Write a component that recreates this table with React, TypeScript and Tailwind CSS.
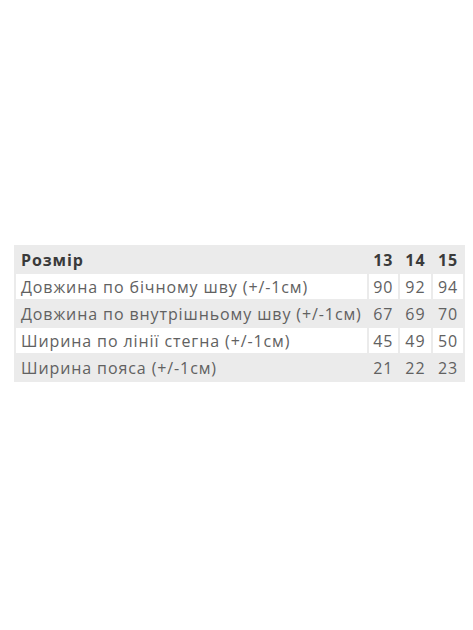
const rows = [
  { label: 'Довжина по бічному шву (+/-1см)', values: ['90', '92', '94'] },
  { label: 'Довжина по внутрішньому шву (+/-1см)', values: ['67', '69', '70'] },
  { label: 'Ширина по лінії стегна (+/-1см)', values: ['45', '49', '50'] },
  { label: 'Ширина пояса (+/-1см)', values: ['21', '22', '23'] },
];

const App = () => {
  return (
    <div className="min-h-screen bg-white flex items-center pl-[14px] pb-[3px] font-['Open_Sans',sans-serif]">
      <table className="w-[451px] bg-[#ebebeb] border-separate border-spacing-[2px] text-[16px] leading-none tracking-[0.9px]">
        <thead>
          <tr className="h-[25px]">
            <th className="px-[5px] text-left font-bold text-[#3a3a3a]">Розмір</th>
            <th className="w-[30px] text-center font-bold text-[#3a3a3a]">13</th>
            <th className="w-[32px] text-center font-bold text-[#3a3a3a]">14</th>
            <th className="w-[31px] text-center font-bold text-[#3a3a3a]">15</th>
          </tr>
        </thead>
        <tbody>
          {rows.map((row, i) => (
            <tr key={row.label} className="h-[25px]">
              <td className={`px-[5px] text-left text-[#616161] whitespace-nowrap ${i % 2 === 0 ? 'bg-white' : ''}`}>
                {row.label}
              </td>
              {row.values.map((v, j) => (
                <td key={j} className={`text-center text-[#616161] ${i % 2 === 0 ? 'bg-white' : ''}`}>
                  {v}
                </td>
              ))}
            </tr>
          ))}
        </tbody>
      </table>
    </div>
  );
};

export default App;
